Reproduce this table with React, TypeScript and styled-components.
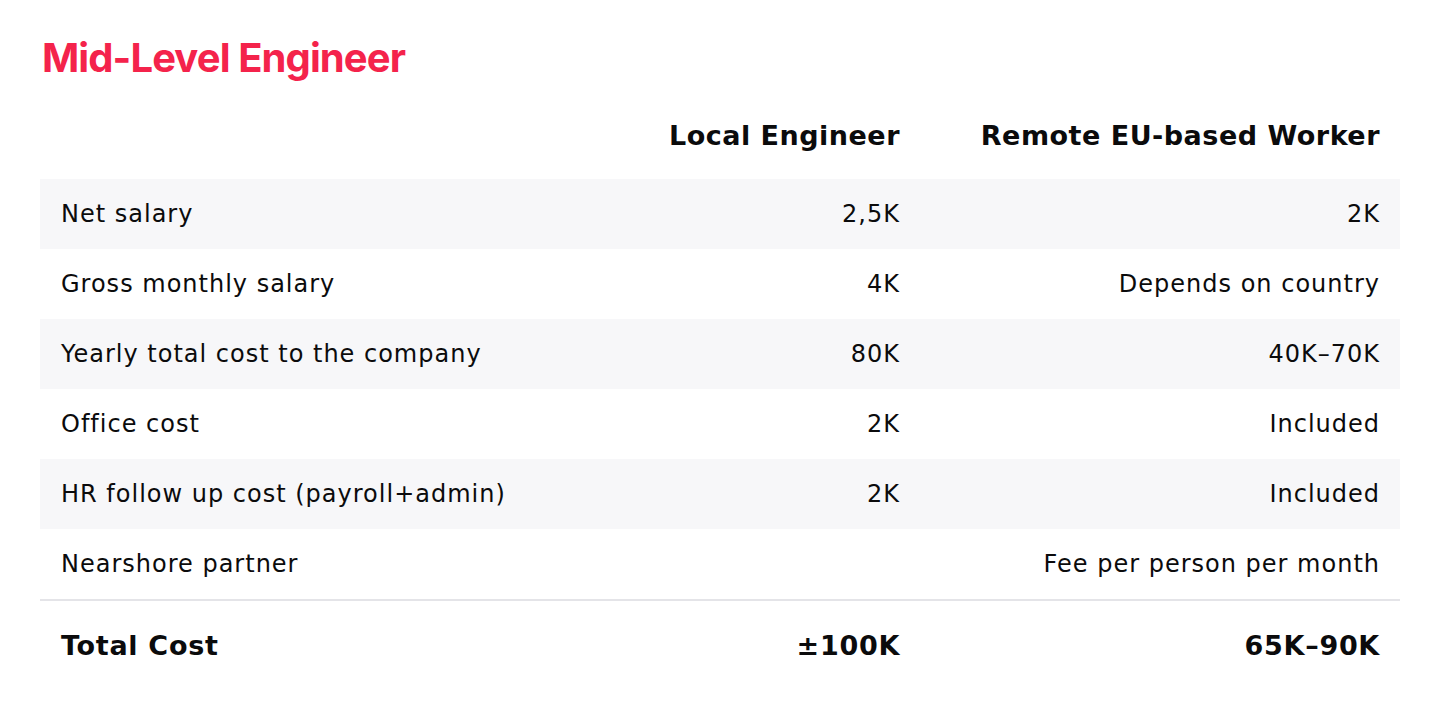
import React from "react";
import styled, { createGlobalStyle } from "styled-components";

/* tokens ---------------------------------------------------------- */
const ACCENT = "#f4234b";
const STRIPE = "#f7f7f9";
const COLS = "1fr 400px 480px";
const TABLE_FONT = `"DejaVu Sans", Inter, sans-serif`;

const GlobalStyle = createGlobalStyle`
  html, body {
    margin: 0;
    padding: 0;
    background: #ffffff;
  }
  body {
    font-family: Inter, "Noto Sans", sans-serif;
    color: #0b0b0c;
    -webkit-font-smoothing: antialiased;
  }
`;

const Page = styled.div`
  width: 1440px;
  height: 720px;
  box-sizing: border-box;
  padding: 34px 40px 0;
`;

const Title = styled.h1`
  margin: 0 0 0 2px;
  font-size: 40px;
  line-height: 48px;
  font-weight: 700;
  letter-spacing: -0.9px;
  color: ${ACCENT};
`;

const Table = styled.div`
  margin-top: 18px;
  display: flex;
  flex-direction: column;
  font-family: ${TABLE_FONT};
`;

const HeadRow = styled.div`
  display: grid;
  grid-template-columns: ${COLS};
  height: 79px;
  align-items: center;
  padding-bottom: 8px;
  box-sizing: border-box;
`;

const HeadCell = styled.div`
  font-size: 27px;
  font-weight: 700;
  letter-spacing: 0.5px;
  text-align: right;
  padding-right: 20px;
`;

const Row = styled.div<{ $shaded?: boolean }>`
  display: grid;
  grid-template-columns: ${COLS};
  height: 70px;
  align-items: center;
  background: ${(p) => (p.$shaded ? STRIPE : "transparent")};
`;

const Cell = styled.div<{ $label?: boolean }>`
  font-size: 24px;
  font-weight: 400;
  letter-spacing: 1px;
  text-align: ${(p) => (p.$label ? "left" : "right")};
  padding: ${(p) => (p.$label ? "0 0 0 21px" : "0 20px 0 0")};
`;

const Divider = styled.div`
  height: 2px;
  background: #e4e4e8;
`;

const TotalRow = styled(Row)`
  height: 88px;
`;

const TotalCell = styled(Cell)`
  font-size: 27px;
  font-weight: 700;
  letter-spacing: 0.7px;
`;

const rows: [string, string, string][] = [
  ["Net salary", "2,5K", "2K"],
  ["Gross monthly salary", "4K", "Depends on country"],
  ["Yearly total cost to the company", "80K", "40K–70K"],
  ["Office cost", "2K", "Included"],
  ["HR follow up cost (payroll+admin)", "2K", "Included"],
  ["Nearshore partner", "", "Fee per person per month"],
];

export default function App() {
  return (
    <>
      <GlobalStyle />
      <Page>
        <Title>Mid-Level Engineer</Title>
        <Table>
          <HeadRow>
            <div />
            <HeadCell>Local Engineer</HeadCell>
            <HeadCell>Remote EU-based Worker</HeadCell>
          </HeadRow>
          {rows.map(([label, local, remote], i) => (
            <Row key={label} $shaded={i % 2 === 0}>
              <Cell $label>{label}</Cell>
              <Cell>{local}</Cell>
              <Cell>{remote}</Cell>
            </Row>
          ))}
          <Divider />
          <TotalRow>
            <TotalCell $label>Total Cost</TotalCell>
            <TotalCell>±100K</TotalCell>
            <TotalCell>65K–90K</TotalCell>
          </TotalRow>
        </Table>
      </Page>
    </>
  );
}
